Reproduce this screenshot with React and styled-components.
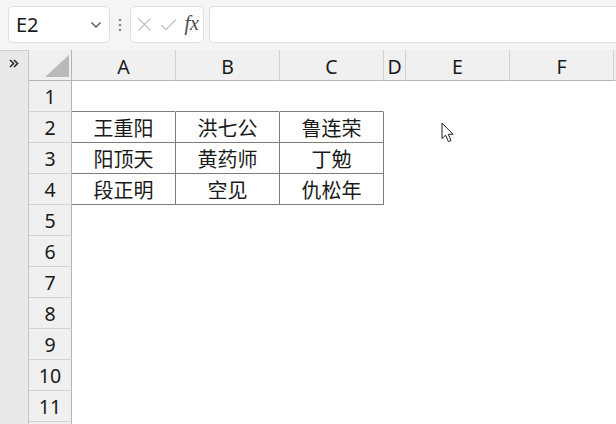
import React from 'react';
import styled, { createGlobalStyle } from 'styled-components';

const GlobalStyle = createGlobalStyle`
  html, body {
    margin: 0;
    padding: 0;
    background: #ffffff;
  }
  body {
    font-family: "Noto Sans", "Noto Sans CJK SC", sans-serif;
  }
`;

const Page = styled.div`
  position: relative;
  width: 616px;
  height: 424px;
  overflow: hidden;
  display: flex;
  flex-direction: column;
  background: #ffffff;
`;

const Toolbar = styled.div`
  height: 50px;
  box-sizing: border-box;
  padding: 6px 0 0 8px;
  display: flex;
  align-items: flex-start;
  background: #f5f5f5;
  flex-shrink: 0;
`;

const Box = styled.div`
  height: 37px;
  box-sizing: border-box;
  background: #ffffff;
  border: 1px solid #dedede;
  border-radius: 5px;
  display: flex;
  align-items: center;
`;

const NameBox = styled(Box)`
  width: 102px;
  padding: 0 7px 0 7px;
  justify-content: space-between;
  font-size: 20px;
  color: #1a1a1a;
`;

const Grip = styled.div`
  width: 20px;
  height: 37px;
  display: flex;
  align-items: center;
  justify-content: center;
`;

const FxBox = styled(Box)`
  width: 74px;
  padding: 0 4px 0 6px;
  justify-content: space-between;
`;

const FxLabel = styled.span`
  font-family: "Liberation Serif", "DejaVu Serif", serif;
  font-style: italic;
  font-size: 20px;
  color: #4a4a4a;
  padding-bottom: 3px;
`;

const FormulaInput = styled(Box)`
  margin-left: 5px;
  flex: 1;
  border-right: none;
  border-radius: 5px 0 0 5px;
`;

const Body = styled.div`
  flex: 1;
  display: flex;
`;

const SideStrip = styled.div`
  width: 29px;
  box-sizing: border-box;
  background: #e8e8e8;
  border-right: 1px solid #c6c6c6;
  border-top: 1px solid #d0d0d0;
  display: flex;
  justify-content: center;
  padding-top: 8px;
  flex-shrink: 0;
`;

const Sheet = styled.div`
  flex: 1;
  display: grid;
  grid-template-columns: 43px 104px 104px 104px 22px 104px 104px 1fr;
  grid-auto-rows: 31px;
  align-content: start;
`;

const Cell = styled.div`
  box-sizing: border-box;
  display: flex;
  align-items: center;
  justify-content: center;
  font-size: 19.5px;
  color: #1a1a1a;
`;

const ColHead = styled(Cell)`
  background: #f0f0f0;
  border-right: 1px solid ${({ $last }) => ($last ? 'transparent' : '#d2d2d2')};
  border-bottom: 1px solid #b4b4b4;
  padding-top: 2px;
`;

const Corner = styled(Cell)`
  background: #f0f0f0;
  border-right: 1px solid #b4b4b4;
  border-bottom: 1px solid #b4b4b4;
  justify-content: flex-end;
  align-items: flex-end;
  padding: 0 2px 3px 0;
`;

const RowHead = styled(Cell)`
  background: #f0f0f0;
  border-right: 1px solid #b4b4b4;
  border-bottom: 1px solid #d2d2d2;
  padding-top: 1px;
`;

const DataCell = styled(Cell)`
  font-family: "Noto Sans CJK SC", "Noto Sans", sans-serif;
  font-size: 20px;
  background: #ffffff;
  border-right: 1px solid ${({ $boxRight }) => ($boxRight ? '#7c7c7c' : 'transparent')};
  border-bottom: 1px solid ${({ $boxBottom }) => ($boxBottom ? '#7c7c7c' : 'transparent')};
`;

const Pointer = styled.svg`
  position: absolute;
  left: 441px;
  top: 122px;
`;

const columns = ['A', 'B', 'C', 'D', 'E', 'F'];

const data = {
  2: ['王重阳', '洪七公', '鲁连荣'],
  3: ['阳顶天', '黄药师', '丁勉'],
  4: ['段正明', '空见', '仇松年'],
};

// row 12 is only a sliver at the bottom edge, its number is not visible
const rows = [1, 2, 3, 4, 5, 6, 7, 8, 9, 10, 11, 12];

const Chevron = () => (
  <svg width="12" height="8" viewBox="0 0 12 8">
    <path d="M1.5 1.5 L6 6 L10.5 1.5" fill="none" stroke="#555" strokeWidth="1.4" />
  </svg>
);

const Dots = () => (
  <svg width="4" height="14" viewBox="0 0 4 14">
    <circle cx="2" cy="2" r="1.3" fill="#8a8a8a" />
    <circle cx="2" cy="7" r="1.3" fill="#8a8a8a" />
    <circle cx="2" cy="12" r="1.3" fill="#8a8a8a" />
  </svg>
);

const Cross = () => (
  <svg width="15" height="15" viewBox="0 0 15 15">
    <path d="M1.5 1.5 L13.5 13.5 M13.5 1.5 L1.5 13.5" stroke="#c4c4c4" strokeWidth="1.3" fill="none" />
  </svg>
);

const Check = () => (
  <svg width="17" height="13" viewBox="0 0 17 13">
    <path d="M1 7 L6 11.5 L16 1.5" stroke="#c4c4c4" strokeWidth="1.3" fill="none" />
  </svg>
);

const DoubleChevron = () => (
  <svg width="10" height="9" viewBox="0 0 10 9">
    <path d="M1 1 L4.5 4.5 L1 8 M5 1 L8.5 4.5 L5 8" stroke="#333" strokeWidth="1.7" fill="none" />
  </svg>
);

const CornerTriangle = () => (
  <svg width="24" height="22" viewBox="0 0 24 22">
    <polygon points="24,0 24,22 0,22" fill="#b9b9b9" />
  </svg>
);

export default function App() {
  return (
    <>
      <GlobalStyle />
      <Page>
        <Toolbar>
          <NameBox>
            <span>E2</span>
            <Chevron />
          </NameBox>
          <Grip>
            <Dots />
          </Grip>
          <FxBox>
            <Cross />
            <Check />
            <FxLabel>fx</FxLabel>
          </FxBox>
          <FormulaInput />
        </Toolbar>
        <Body>
          <SideStrip>
            <DoubleChevron />
          </SideStrip>
          <Sheet>
            <Corner>
              <CornerTriangle />
            </Corner>
            {columns.map((c) => (
              <ColHead key={c}>{c}</ColHead>
            ))}
            <ColHead $last />
            {rows.map((r) => (
              <React.Fragment key={r}>
                <RowHead>{r < 12 ? r : null}</RowHead>
                {columns.map((c, i) => {
                  const value = data[r] ? data[r][i] : undefined;
                  const inTable = i < 3 && r >= 2 && r <= 4;
                  const aboveTable = i < 3 && r === 1;
                  return (
                    <DataCell
                      key={c}
                      $boxRight={inTable}
                      $boxBottom={inTable || aboveTable}
                    >
                      {value}
                    </DataCell>
                  );
                })}
                <DataCell />
              </React.Fragment>
            ))}
          </Sheet>
        </Body>
        <Pointer width="14" height="22" viewBox="0 0 14 22">
          <path
            d="M1 1 L1 16.5 L4.6 13.2 L7.4 19.6 L10 18.5 L7.3 12.3 L12 12.3 Z"
            fill="#ffffff"
            stroke="#222"
            strokeWidth="1"
            strokeLinejoin="round"
          />
        </Pointer>
      </Page>
    </>
  );
}
